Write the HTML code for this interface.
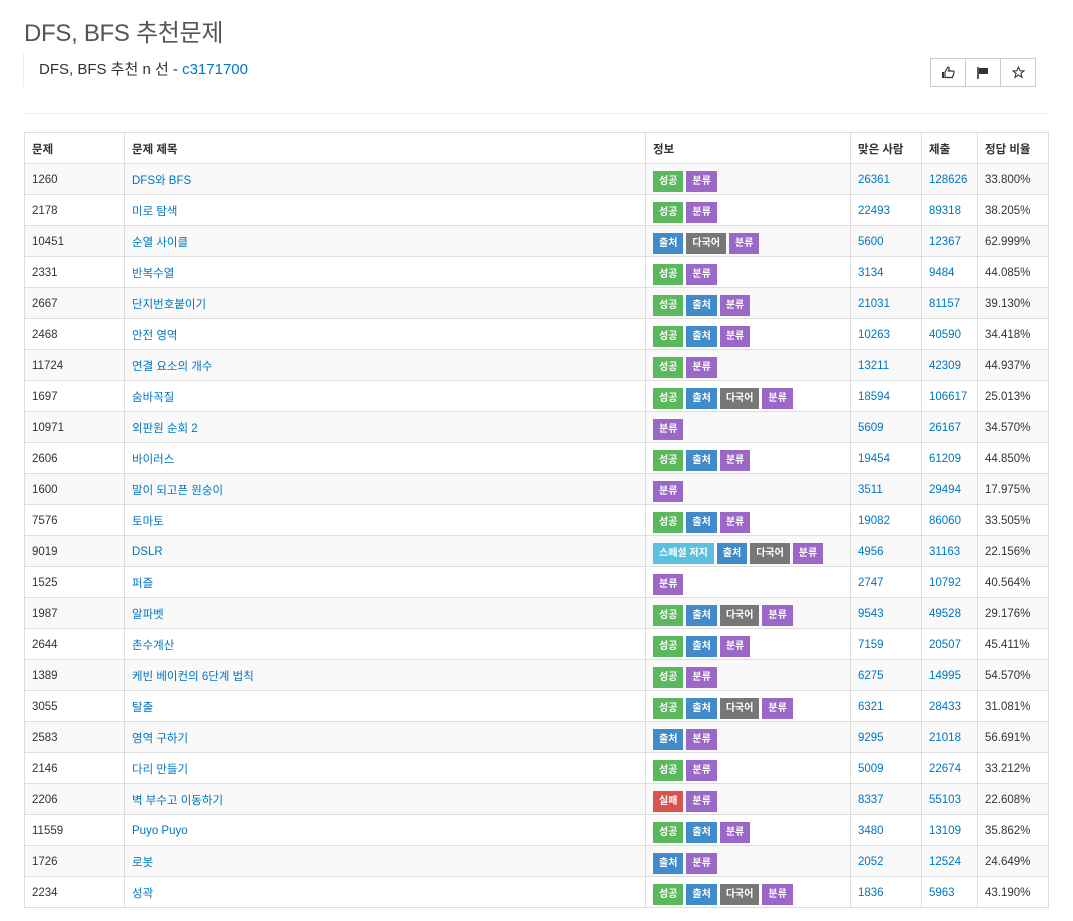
<!DOCTYPE html>
<html><head><meta charset="utf-8">
<style>
*{box-sizing:border-box;margin:0;padding:0}
body{width:1073px;height:921px;background:#fff;font-family:"Liberation Sans","Noto Sans CJK KR",sans-serif;color:#333;font-size:11.5px;overflow:hidden;position:relative}
h1{position:absolute;left:24px;top:13px;font-size:24px;font-weight:normal;color:#555;letter-spacing:-0.3px}
.sub{position:absolute;left:23px;top:53px;height:34px;border-left:1px solid #eee;padding-left:15px;font-size:15px;line-height:34px;color:#333}
.sub a{color:#0076c0}
.btns{position:absolute;left:930px;top:58px;display:flex}
.btns div{width:36px;height:29px;border:1px solid #ccc;margin-left:-1px;display:flex;align-items:center;justify-content:center;background:#fff}
.btns div:first-child{margin-left:0}
hr{position:absolute;left:24px;top:113px;width:1024px;border:0;border-top:1px solid #eee}
table{position:absolute;left:24px;top:132px;width:1024px;border-collapse:collapse;table-layout:fixed}
td,th{border:1px solid #ddd;height:31px;padding:0 7px;text-align:left;vertical-align:middle;white-space:nowrap;overflow:hidden;padding-top:1px}
th{font-weight:bold;color:#333;font-size:11.5px}
tbody tr:nth-child(odd){background:#f9f9f9}
a{color:#0076c0;text-decoration:none}
.l{display:inline-block;height:21px;line-height:21px;color:#fff;font-weight:bold;font-size:10px;padding:0 6px;margin-right:3px;vertical-align:middle;position:relative;top:2px}
.s{background:#5cb85c}.p{background:#428bca}.d{background:#777}.c{background:#9b68c8}.i{background:#5bc0de}.f{background:#d9534f}
</style></head><body>
<h1>DFS, BFS 추천문제</h1>
<div class="sub">DFS, BFS 추천 n 선 - <a>c3171700</a></div>
<div class="btns">
<div><svg width="14" height="13" viewBox="0 0 14 13"><path d="M1 6h2v6H1z" fill="#333"/><path d="M4 6l3-5c1 0 1.5 1 1 2.5L7.5 5H12c1 0 1.3 1 1 1.5l-1.5 5H4z" fill="none" stroke="#333" stroke-width="1.2"/></svg></div>
<div><svg width="12" height="12" viewBox="0 0 12 12"><path d="M1 0v12" stroke="#333" stroke-width="1.6"/><path d="M2 1h9v6H2z" fill="#333"/></svg></div>
<div><svg width="13" height="13" viewBox="0 0 24 24"><path d="M12 2l3 7h7l-5.5 4.5 2 7.5L12 16.5 5.5 21l2-7.5L2 9h7z" fill="none" stroke="#333" stroke-width="2"/></svg></div>
</div>
<hr>
<table>
<colgroup><col style="width:100px"><col style="width:521px"><col style="width:205px"><col style="width:71px"><col style="width:56px"><col style="width:71px"></colgroup>
<thead><tr><th>문제</th><th>문제 제목</th><th>정보</th><th>맞은 사람</th><th>제출</th><th>정답 비율</th></tr></thead>
<tbody>
<tr><td>1260</td><td><a>DFS와 BFS</a></td><td><span class="l s">성공</span><span class="l c">분류</span></td><td><a>26361</a></td><td><a>128626</a></td><td>33.800%</td></tr>
<tr><td>2178</td><td><a>미로 탐색</a></td><td><span class="l s">성공</span><span class="l c">분류</span></td><td><a>22493</a></td><td><a>89318</a></td><td>38.205%</td></tr>
<tr><td>10451</td><td><a>순열 사이클</a></td><td><span class="l p">출처</span><span class="l d">다국어</span><span class="l c">분류</span></td><td><a>5600</a></td><td><a>12367</a></td><td>62.999%</td></tr>
<tr><td>2331</td><td><a>반복수열</a></td><td><span class="l s">성공</span><span class="l c">분류</span></td><td><a>3134</a></td><td><a>9484</a></td><td>44.085%</td></tr>
<tr><td>2667</td><td><a>단지번호붙이기</a></td><td><span class="l s">성공</span><span class="l p">출처</span><span class="l c">분류</span></td><td><a>21031</a></td><td><a>81157</a></td><td>39.130%</td></tr>
<tr><td>2468</td><td><a>안전 영역</a></td><td><span class="l s">성공</span><span class="l p">출처</span><span class="l c">분류</span></td><td><a>10263</a></td><td><a>40590</a></td><td>34.418%</td></tr>
<tr><td>11724</td><td><a>연결 요소의 개수</a></td><td><span class="l s">성공</span><span class="l c">분류</span></td><td><a>13211</a></td><td><a>42309</a></td><td>44.937%</td></tr>
<tr><td>1697</td><td><a>숨바꼭질</a></td><td><span class="l s">성공</span><span class="l p">출처</span><span class="l d">다국어</span><span class="l c">분류</span></td><td><a>18594</a></td><td><a>106617</a></td><td>25.013%</td></tr>
<tr><td>10971</td><td><a>외판원 순회 2</a></td><td><span class="l c">분류</span></td><td><a>5609</a></td><td><a>26167</a></td><td>34.570%</td></tr>
<tr><td>2606</td><td><a>바이러스</a></td><td><span class="l s">성공</span><span class="l p">출처</span><span class="l c">분류</span></td><td><a>19454</a></td><td><a>61209</a></td><td>44.850%</td></tr>
<tr><td>1600</td><td><a>말이 되고픈 원숭이</a></td><td><span class="l c">분류</span></td><td><a>3511</a></td><td><a>29494</a></td><td>17.975%</td></tr>
<tr><td>7576</td><td><a>토마토</a></td><td><span class="l s">성공</span><span class="l p">출처</span><span class="l c">분류</span></td><td><a>19082</a></td><td><a>86060</a></td><td>33.505%</td></tr>
<tr><td>9019</td><td><a>DSLR</a></td><td><span class="l i">스페셜 저지</span><span class="l p">출처</span><span class="l d">다국어</span><span class="l c">분류</span></td><td><a>4956</a></td><td><a>31163</a></td><td>22.156%</td></tr>
<tr><td>1525</td><td><a>퍼즐</a></td><td><span class="l c">분류</span></td><td><a>2747</a></td><td><a>10792</a></td><td>40.564%</td></tr>
<tr><td>1987</td><td><a>알파벳</a></td><td><span class="l s">성공</span><span class="l p">출처</span><span class="l d">다국어</span><span class="l c">분류</span></td><td><a>9543</a></td><td><a>49528</a></td><td>29.176%</td></tr>
<tr><td>2644</td><td><a>촌수계산</a></td><td><span class="l s">성공</span><span class="l p">출처</span><span class="l c">분류</span></td><td><a>7159</a></td><td><a>20507</a></td><td>45.411%</td></tr>
<tr><td>1389</td><td><a>케빈 베이컨의 6단계 법칙</a></td><td><span class="l s">성공</span><span class="l c">분류</span></td><td><a>6275</a></td><td><a>14995</a></td><td>54.570%</td></tr>
<tr><td>3055</td><td><a>탈출</a></td><td><span class="l s">성공</span><span class="l p">출처</span><span class="l d">다국어</span><span class="l c">분류</span></td><td><a>6321</a></td><td><a>28433</a></td><td>31.081%</td></tr>
<tr><td>2583</td><td><a>영역 구하기</a></td><td><span class="l p">출처</span><span class="l c">분류</span></td><td><a>9295</a></td><td><a>21018</a></td><td>56.691%</td></tr>
<tr><td>2146</td><td><a>다리 만들기</a></td><td><span class="l s">성공</span><span class="l c">분류</span></td><td><a>5009</a></td><td><a>22674</a></td><td>33.212%</td></tr>
<tr><td>2206</td><td><a>벽 부수고 이동하기</a></td><td><span class="l f">실패</span><span class="l c">분류</span></td><td><a>8337</a></td><td><a>55103</a></td><td>22.608%</td></tr>
<tr><td>11559</td><td><a>Puyo Puyo</a></td><td><span class="l s">성공</span><span class="l p">출처</span><span class="l c">분류</span></td><td><a>3480</a></td><td><a>13109</a></td><td>35.862%</td></tr>
<tr><td>1726</td><td><a>로봇</a></td><td><span class="l p">출처</span><span class="l c">분류</span></td><td><a>2052</a></td><td><a>12524</a></td><td>24.649%</td></tr>
<tr><td>2234</td><td><a>성곽</a></td><td><span class="l s">성공</span><span class="l p">출처</span><span class="l d">다국어</span><span class="l c">분류</span></td><td><a>1836</a></td><td><a>5963</a></td><td>43.190%</td></tr>
</tbody></table>
</body></html>
